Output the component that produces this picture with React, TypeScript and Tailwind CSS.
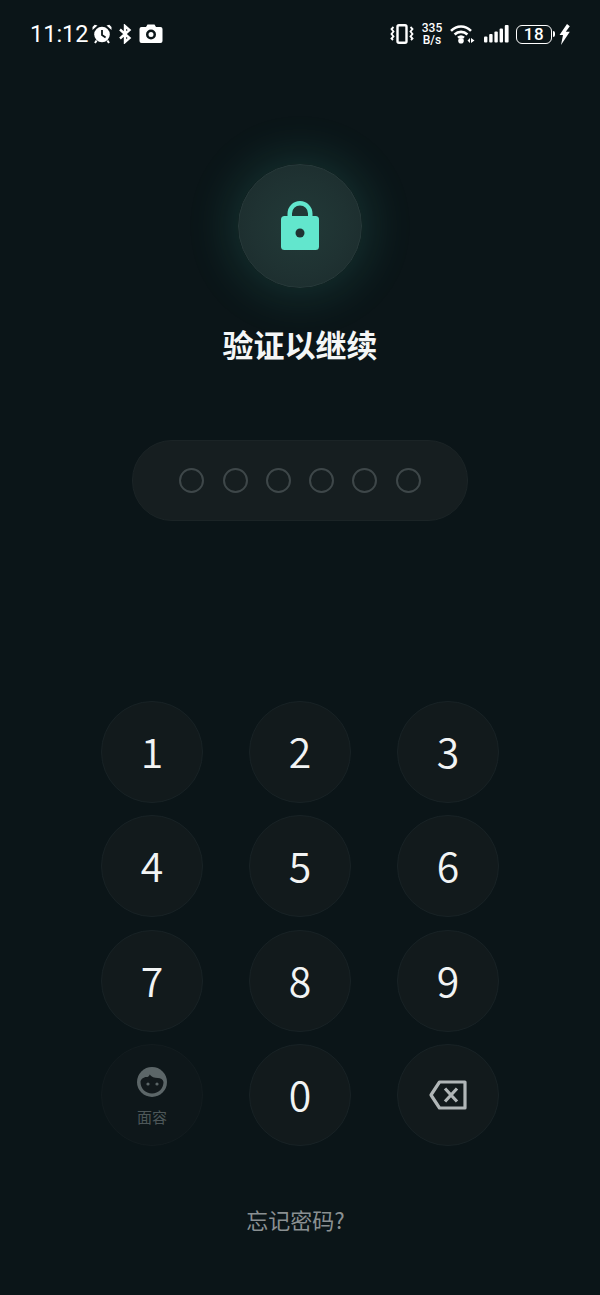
import { Fragment } from 'react'

const KEYS = ['1', '2', '3', '4', '5', '6', '7', '8', '9']
const PIN_DOTS = [0, 1, 2, 3, 4, 5]
const CJK = 'font-["Noto_Sans_CJK_SC",sans-serif]'

function AlarmIcon() {
  return (
    <svg width="20" height="20" viewBox="0 0 20 20" fill="none">
      <circle cx="10" cy="10.5" r="7.800" fill="#fff" />
      <path d="M10 6v5l3.600 2.600" stroke="#0b1518" strokeWidth="1.800" />
      <path d="M.5 6 5.500 1.500 2.700.8.500 3zM19.500 6 14.500 1.500l2.800-.7 2.200 2.200z" fill="#fff" />
      <path d="M4.600 16.400 3 19M15.400 16.400 17 19" stroke="#fff" strokeWidth="2" />
    </svg>
  )
}

function BluetoothIcon() {
  return (
    <svg width="14" height="20" viewBox="0 0 14 20" fill="none" stroke="#fff" strokeWidth="2.400">
      <path d="M2 5.500 11.500 14 7 18V2l4.500 4L2 14.500" />
    </svg>
  )
}

function CameraIcon() {
  return (
    <svg width="24" height="20" viewBox="0 0 24 20">
      <path
        fillRule="evenodd"
        fill="#fff"
        d="M2.500 3H7l1.500-2.500h7L17 3h4.500A2 2 0 0 1 23.500 5v12a2 2 0 0 1-2 2h-19a2 2 0 0 1-2-2V5a2 2 0 0 1 2-2zM12 5.500a5 5 0 1 0 0 10 5 5 0 0 0 0-10zM12 8a2.500 2.500 0 1 1 0 5 2.500 2.500 0 0 1 0-5z"
      />
    </svg>
  )
}

function VibrateIcon() {
  return (
    <svg width="24" height="20" viewBox="0 0 24 20" fill="none" stroke="#fff">
      <rect x="7.500" y="1.200" width="9" height="17.600" rx="1.500" strokeWidth="2.400" />
      <path d="M3.500 3 1.500 5l2 2.500-2 2.500 2 2.500-2 2 1.500 1.500M20.500 3l2 2-2 2.500 2 2.500-2 2.500 2 2-1.500 1.500" strokeWidth="1.800" />
    </svg>
  )
}

function WifiIcon() {
  return (
    <svg width="25" height="20" viewBox="0 0 25 20" fill="none" stroke="#fff" strokeWidth="2.600">
      <path d="M1 6.800C6.800 1 15.200 1 21 6.800" />
      <path d="M4.600 10.500c3.700-3.500 9.100-3.500 12.800 0" />
      <path d="M8 13.800c1.800-1.500 4.200-1.500 6 0" />
      <circle cx="11" cy="16.800" r="2.800" fill="#fff" stroke="none" />
      <path d="M17.500 16.500l2.500-2.500v5zM21 14l3.500 2.500L21 19z" fill="#fff" stroke="none" />
    </svg>
  )
}

function SignalIcon() {
  return (
    <svg width="25" height="20" viewBox="0 0 25 20" fill="#fff">
      <rect x="0" y="12.500" width="3.400" height="6" rx="1" />
      <rect x="5.200" y="10" width="3.400" height="8.500" rx="1" />
      <rect x="10.400" y="7.500" width="3.400" height="11" rx="1" />
      <rect x="15.600" y="4.500" width="3.400" height="14" rx="1" />
      <rect x="20.800" y="1" width="3.800" height="17.500" rx="1" />
    </svg>
  )
}

function BoltIcon() {
  return (
    <svg width="11" height="21" viewBox="0 0 11 21" fill="#fff">
      <path d="M8 0 .5 11h3.500L2 21l8.800-13.200H6.800l4-5.500z" />
    </svg>
  )
}

function StatusBar() {
  return (
    <div className="flex h-[68px] items-center justify-between px-[30px]">
      <div className="flex items-center">
        <span className="w-[62px] pt-[1px] font-['Roboto',sans-serif] text-[23.500px] leading-none text-white">11:12</span>
        <span className="flex"><AlarmIcon /></span>
        <span className="ml-[6px] flex"><BluetoothIcon /></span>
        <span className="ml-[7px] flex"><CameraIcon /></span>
      </div>
      <div className="flex items-center">
        <VibrateIcon />
        <div className="ml-[7px] flex w-[22px] flex-col items-center font-['Roboto',sans-serif] text-[12px] font-medium leading-[12px] text-white">
          <span>335</span>
          <span>B/s</span>
        </div>
        <span className="ml-[7px] flex"><WifiIcon /></span>
        <span className="ml-[9px] flex"><SignalIcon /></span>
        <div className="ml-[7px] flex h-[19px] w-[36px] items-center justify-center rounded-[6px] border-[1.500px] border-white font-['Roboto',sans-serif] text-[17px] font-medium leading-none tracking-[0.5px] text-white">
          18
        </div>
        <div className="ml-[1px] h-[6px] w-[2px] rounded-r-sm bg-white" />
        <span className="ml-[4px] flex"><BoltIcon /></span>
      </div>
    </div>
  )
}

function LockBadge() {
  return (
    <div className="flex h-[124px] w-[124px] items-center justify-center rounded-full border border-[#273a3a] bg-[radial-gradient(circle,#223a38_0%,#1f3232_55%,#1b2a2b_100%)] shadow-[0_0_46px_8px_rgba(70,200,175,0.16)]">
      <svg width="38" height="50" viewBox="0 0 38 50">
        <path d="M8.750 20V12.500a10.250 10.250 0 0 1 20.500 0V20" fill="none" stroke="#62e6cd" strokeWidth="4.500" />
        <rect x="0" y="15" width="38" height="34" rx="3.500" fill="#62e6cd" />
        <circle cx="19" cy="32" r="4.500" fill="#1f3232" />
      </svg>
    </div>
  )
}

function Key({ children, dim }: { children: React.ReactNode; dim?: boolean }) {
  return (
    <button
      className={`flex h-[102px] w-[102px] flex-col items-center justify-center rounded-full border ${
        dim ? 'border-[#131c1f] bg-[#0e171a] pt-[4px]' : 'border-[#182225] bg-[#121a1c]'
      }`}
    >
      {children}
    </button>
  )
}

function FaceKey() {
  return (
    <Key dim>
      <svg width="30" height="30" viewBox="0 0 30 30">
        <circle cx="15" cy="15" r="15" fill="#5c6668" />
        <path d="M3.500 15c0-2.500 3-5 6-5 1.500 0 2.500-.5 3.200-2.500 1.500 2.500 5 3.500 8 3.500 3 0 5.300 1.500 5.800 4 0 6.500-5 11.500-11.500 11.500S3.500 21.500 3.500 15z" fill="#12191c" />
        <circle cx="11" cy="17" r="1.600" fill="#5c6668" />
        <circle cx="20" cy="17" r="1.600" fill="#5c6668" />
      </svg>
      <span className={`${CJK} mt-[10px] text-[15px] font-normal leading-[20px] text-[#4d5759]`}>面容</span>
    </Key>
  )
}

function BackspaceKey() {
  return (
    <Key>
      <svg width="38" height="30" viewBox="0 0 38 30" fill="none" stroke="#b0b6b7" strokeWidth="3.200">
        <path d="M10.500 2H36v26H10.500L2 15z" strokeLinejoin="round" />
        <path d="M16 8.500l12 13M28 8.500l-12 13" />
      </svg>
    </Key>
  )
}

export default function App() {
  return (
    <div className="flex h-[1295px] w-full flex-col bg-[#0b1518]">
      <StatusBar />
      <div className="mt-[96px] flex flex-col items-center">
        <LockBadge />
        <h1 className={`${CJK} mt-[34px] text-[31px] font-bold leading-[44px] text-[#f4f6f6]`}>验证以继续</h1>
        <div className="mt-[74px] flex h-[81px] w-[336px] items-center justify-center gap-[18.300px] rounded-[40px] border border-[#1b2426] bg-[#161e20] pb-[1px]">
          {PIN_DOTS.map((d) => (
            <span key={d} className="h-[25px] w-[25px] rounded-full border-2 border-[#3e4749]" />
          ))}
        </div>
      </div>
      <div className={`${CJK} mx-auto mt-[180px] grid w-[398px] grid-cols-[102px_102px_102px] gap-x-[46px] gap-y-[12.400px] text-[41px] font-[350] text-[#f2f4f4]`}>
        {KEYS.map((k) => (
          <Fragment key={k}>
            <Key><span className="-mt-[3px]">{k}</span></Key>
          </Fragment>
        ))}
        <FaceKey />
        <Key><span className="-mt-[3px]">0</span></Key>
        <BackspaceKey />
      </div>
      <p className={`${CJK} mt-[58px] pr-[9px] text-center text-[22px] leading-[30px] text-[#8a9092]`}>忘记密码?</p>
    </div>
  )
}
